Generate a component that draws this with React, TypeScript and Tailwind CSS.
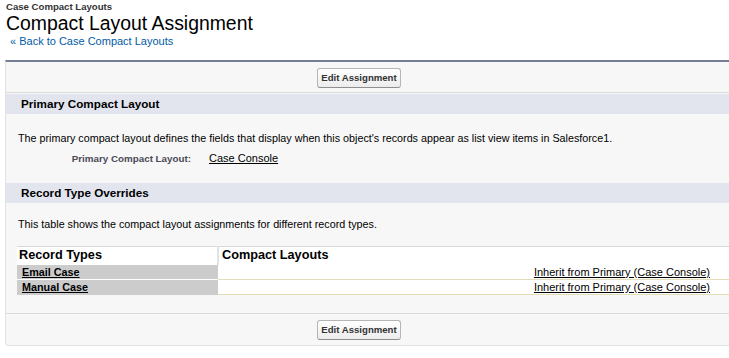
export default function App() {
  const rows = ['Email Case', 'Manual Case']

  return (
    <div className="min-h-screen w-[729px] overflow-hidden bg-white font-['Liberation_Sans',Arial,sans-serif] text-black">
      <div className="pl-[6px]">
        <div className="h-[12px] pt-[1px] text-[9.6px] font-bold leading-[11px] text-[#333]">Case Compact Layouts</div>
        <h1 className="h-[22px] text-[19.4px] leading-[22px] text-black">Compact Layout Assignment</h1>
        <div className="mt-[1px] pl-[4px] text-[11px] leading-[13px] text-[#015ba7]">
          « <a href="#" className="hover:underline">Back to Case Compact Layouts</a>
        </div>
      </div>

      <div className="ml-[5px] mt-[12px] rounded-bl-[4px] border-t-2 border-l border-b border-[#e0e3e5] border-t-[#747e96] bg-[#f7f7f7]">
        <div className="flex h-[31px] items-start justify-center border-b border-[#dbdbdb] pt-[6px] pr-[17px]">
          <EditButton />
        </div>

        <h3 className="mt-[1px] flex h-[20px] items-center bg-[#e2e5ee] pl-[15px] text-[11.7px] font-bold">Primary Compact Layout</h3>
        <p className="pl-[12px] pt-[18px] text-[10.75px] leading-[13px]">
          The primary compact layout defines the fields that display when this object&apos;s records appear as list view items in Salesforce1.
        </p>
        <div className="mt-[7px] flex items-center text-[11px] leading-[13px]">
          <span className="w-[185px] text-right text-[9.8px] font-bold text-[#4a4a56]">Primary Compact Layout:</span>
          <a href="#" className="ml-[18px] underline">Case Console</a>
        </div>

        <h3 className="mt-[18px] flex h-[20px] items-center bg-[#e2e5ee] pl-[15px] text-[11.7px] font-bold">Record Type Overrides</h3>
        <p className="pl-[12px] pt-[15px] text-[10.75px] leading-[13px]">
          This table shows the compact layout assignments for different record types.
        </p>

        <table className="ml-[11px] mt-[15px] w-[calc(100%-11px)] border-collapse text-[11px]">
          <thead>
            <tr className="h-[18px] border-t border-[#d4dadc] bg-white">
              <th className="w-[201px] border-r-2 border-[#e0e3e5] pl-[2px] text-left text-[12.7px] font-bold leading-[17px]">Record Types</th>
              <th className="pl-[3px] text-left text-[12.7px] font-bold leading-[17px]">Compact Layouts</th>
            </tr>
          </thead>
          <tbody>
            {rows.map((r) => (
              <tr key={r} className="h-[15px]">
                <td className="border-t border-white bg-[#cccccc] pl-[5px] text-[10.8px] font-bold leading-[14px]">
                  <a href="#" className="underline">{r}</a>
                </td>
                <td className="border-b border-[#e3deb8] bg-white pr-[19px] text-right leading-[14px]">
                  <a href="#" className="underline">Inherit from Primary (Case Console)</a>
                </td>
              </tr>
            ))}
          </tbody>
        </table>

        <div className="mt-[18px] flex h-[32px] items-start justify-center border-t border-[#dbdbdb] pt-[6px] pr-[17px]">
          <EditButton />
        </div>
      </div>
    </div>
  )
}

function EditButton() {
  return (
    <button className="h-[20px] whitespace-nowrap rounded-[3px] border border-[#b5b5b5] border-b-[#8f8f8f] bg-gradient-to-b from-white to-[#ececec] px-[3px] text-[9.6px] font-bold leading-[18px] text-[#333]">
      Edit Assignment
    </button>
  )
}
